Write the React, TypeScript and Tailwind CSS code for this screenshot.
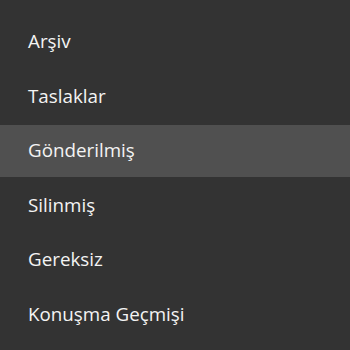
import React from "react";

const folders = ["Arşiv", "Taslaklar", "Gönderilmiş", "Silinmiş", "Gereksiz", "Konuşma Geçmişi"];

export default function App() {
  const selected = "Gönderilmiş";
  return (
    <div className="w-[350px] h-[350px] bg-[#333333] overflow-hidden font-['Open_Sans',sans-serif]">
      <ul className="flex flex-col gap-[2.5px] pt-[15.5px]">
        {folders.map((name) => (
          <li
            key={name}
            className={
              "h-[52px] flex items-center pl-[28px] text-[18.8px] text-[#f4f4f4] " +
              (name === selected ? "bg-[#505050]" : "")
            }
          >
            {name}
          </li>
        ))}
      </ul>
    </div>
  );
}
